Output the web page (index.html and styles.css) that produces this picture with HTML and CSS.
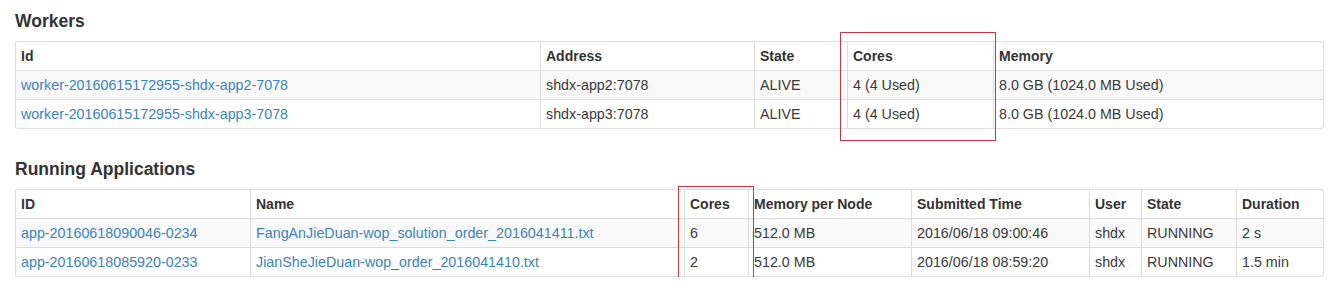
FILE: index.html
```html
<!DOCTYPE html>
<html lang="en">
<head>
    <meta charset="UTF-8">
    <title>Spark Master</title>
    <link rel="stylesheet" href="styles.css">
</head>
<body>
    <div class="page">
        <div class="section">
            <h4>Workers</h4>
            <table class="table workers">
                <colgroup>
                    <col style="width: 525px">
                    <col style="width: 214px">
                    <col style="width: 93px">
                    <col style="width: 146px">
                    <col>
                </colgroup>
                <thead>
                    <tr><th>Id</th><th>Address</th><th>State</th><th>Cores</th><th>Memory</th></tr>
                </thead>
                <tbody>
                    <tr>
                        <td><a href="#">worker-20160615172955-shdx-app2-7078</a></td>
                        <td>shdx-app2:7078</td>
                        <td>ALIVE</td>
                        <td>4 (4 Used)</td>
                        <td>8.0 GB (1024.0 MB Used)</td>
                    </tr>
                    <tr>
                        <td><a href="#">worker-20160615172955-shdx-app3-7078</a></td>
                        <td>shdx-app3:7078</td>
                        <td>ALIVE</td>
                        <td>4 (4 Used)</td>
                        <td>8.0 GB (1024.0 MB Used)</td>
                    </tr>
                </tbody>
            </table>
            <div class="mark mark-workers"></div>
        </div>

        <div class="section">
            <h4>Running Applications</h4>
            <table class="table apps">
                <colgroup>
                    <col style="width: 235px">
                    <col style="width: 434px">
                    <col style="width: 64px">
                    <col style="width: 163px">
                    <col style="width: 178px">
                    <col style="width: 52px">
                    <col style="width: 95px">
                    <col>
                </colgroup>
                <thead>
                    <tr><th>ID</th><th>Name</th><th>Cores</th><th>Memory per Node</th><th>Submitted Time</th><th>User</th><th>State</th><th>Duration</th></tr>
                </thead>
                <tbody>
                    <tr>
                        <td><a href="#">app-20160618090046-0234</a></td>
                        <td><a href="#">FangAnJieDuan-wop_solution_order_2016041411.txt</a></td>
                        <td>6</td>
                        <td>512.0 MB</td>
                        <td>2016/06/18 09:00:46</td>
                        <td>shdx</td>
                        <td>RUNNING</td>
                        <td>2 s</td>
                    </tr>
                    <tr>
                        <td><a href="#">app-20160618085920-0233</a></td>
                        <td><a href="#">JianSheJieDuan-wop_order_2016041410.txt</a></td>
                        <td>2</td>
                        <td>512.0 MB</td>
                        <td>2016/06/18 08:59:20</td>
                        <td>shdx</td>
                        <td>RUNNING</td>
                        <td>1.5 min</td>
                    </tr>
                </tbody>
            </table>
            <div class="mark mark-apps"></div>
        </div>
    </div>
</body>
</html>
```

FILE: styles.css
```css
* {
    margin: 0;
    padding: 0;
    box-sizing: border-box;
}

body {
    font-family: 'Liberation Sans', Arial, sans-serif;
    font-size: 14px;
    line-height: 20px;
    color: #333;
    background: #fff;
}

.page {
    padding: 1px 15px 0 15px;
    width: 1339px;
}

.section {
    position: relative;
}

h4 {
    font-size: 17.5px;
    line-height: 20px;
    font-weight: bold;
    color: #333;
    margin: 10px 0 10px 0;
}

.section + .section h4 {
    margin-top: 30px;
}

.table {
    width: 1309px;
    table-layout: fixed;
    border-collapse: separate;
    border-spacing: 0;
    border: 1px solid #ddd;
    border-left: 0;
    border-radius: 4px;
}

.table th,
.table td {
    padding: 4px 5px;
    line-height: 20px;
    text-align: left;
    vertical-align: top;
    border-left: 1px solid #ddd;
    border-top: 1px solid #ddd;
    white-space: nowrap;
    overflow: hidden;
}

.table td {
    font-size: 14.3px;
    color: #3a3a3a;
}

.table thead tr:first-child th {
    border-top: 0;
}

.table th {
    font-weight: bold;
}

.table tbody tr:nth-child(odd) td {
    background: #f9f9f9;
}

.table a {
    color: #3a83c0;
    text-decoration: none;
}

/* red annotation boxes drawn over the screenshot */
.mark {
    position: absolute;
    border: 1px solid #cc3540;
}

.mark-workers {
    left: 825px;
    top: 21px;
    width: 156px;
    height: 109px;
}

.mark-apps {
    left: 663px;
    top: 27px;
    width: 76px;
    height: 92px;
}
```
